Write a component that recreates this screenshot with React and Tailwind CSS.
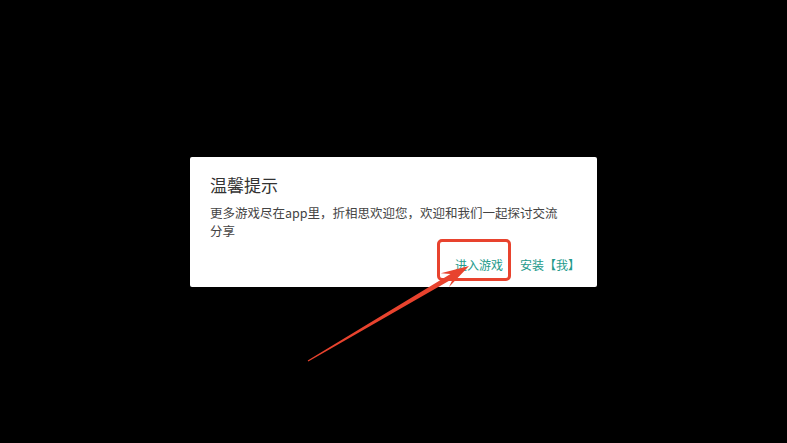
export default function App() {
  return (
    <div
      className="relative flex h-screen w-full items-center justify-center overflow-hidden bg-black"
      style={{ fontFamily: '"Noto Sans CJK SC", "Noto Sans", sans-serif' }}
    >
      <div className="w-[407px] rounded-[2px] bg-white pt-4 pb-[10px] pl-5 pr-[23px]">
        <h2 className="text-[17px] leading-6 text-[#333333]">温馨提示</h2>
        <p className="mr-[8px] mt-[7px] text-[12.5px] leading-[18px] text-[#444444]">
          更多游戏尽在app里，折相思欢迎您，欢迎和我们一起探讨交流分享
        </p>
        <div className="-mr-[6px] mt-[13px] flex items-center justify-end gap-[17px]">
          <button className="relative h-6 text-[12px] leading-6 text-[#239a8b]">
            进入游戏
            <span className="pointer-events-none absolute -left-[18px] -right-[8px] -top-[14px] -bottom-[4px] rounded-[5px] border-[3px] border-[#e8432e]" />
          </button>
          <button className="h-6 text-[12px] leading-6 text-[#239a8b]">安装【我】</button>
        </div>
      </div>

      <svg
        className="pointer-events-none absolute left-0 top-0"
        width="787"
        height="443"
        viewBox="0 0 787 443"
      >
        <polygon
          fill="#e8432e"
          points="308.3,361.4 453.1,278.4 449,287.1 469,266 440.8,273.3 450.5,274 307.7,360.6"
        />
      </svg>
    </div>
  )
}
